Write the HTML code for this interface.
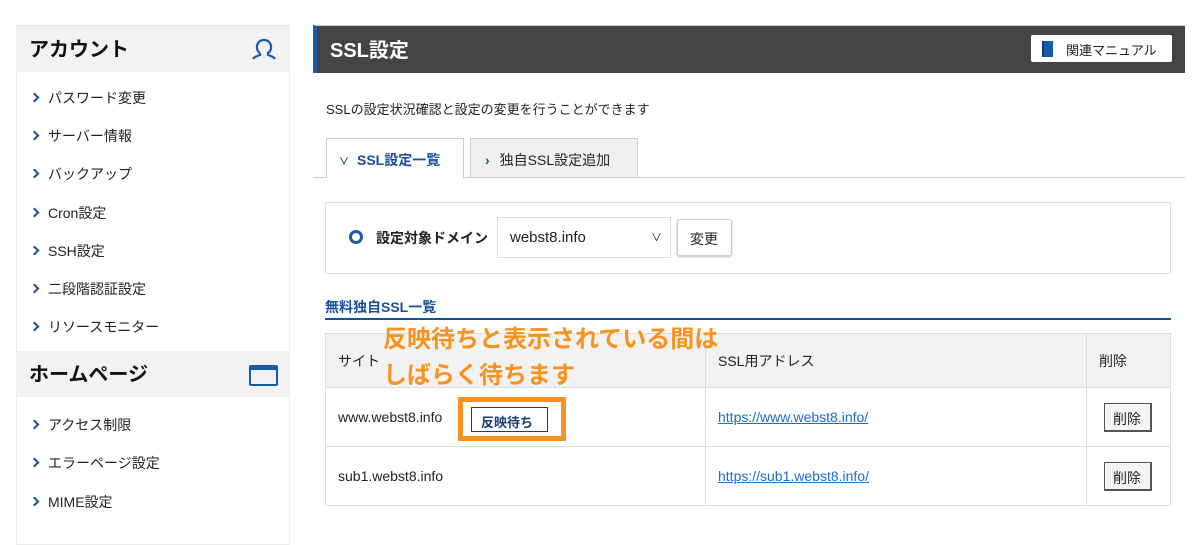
<!DOCTYPE html>
<html><head><meta charset="utf-8"><style>
*{box-sizing:border-box;margin:0;padding:0}
body{width:1200px;height:527px;overflow:hidden;background:#fff;font-family:"Liberation Sans","Noto Sans CJK JP",sans-serif;color:#222;position:relative}
.a{position:absolute}
.side{left:16px;top:25px;width:274px;height:520px;border:1px solid #eee;border-top:1px solid #e6e6e6}
.sh{position:absolute;left:0;width:272px;height:46px;background:#f2f2f2;font-size:20px;font-weight:bold;padding:7px 0 0 12px;color:#111}
.it{position:absolute;left:14px;font-size:14px;color:#222}
.it:before{content:"";display:inline-block;width:5px;height:5px;border-right:2px solid #1a4f9c;border-top:2px solid #1a4f9c;transform:rotate(45deg);margin:0 10px 2px 0}
td,th{border:1px solid #ddd;font-weight:normal;text-align:left;font-size:14px}
a{color:#1a6fc9;text-decoration:underline}
</style></head><body>
<div class="a side">
<div class="sh" style="top:0">アカウント
<svg class="a" style="left:234px;top:11px" width="26" height="24" viewBox="0 0 26 24"><path d="M9 16 C4 13 5 3 13 3 C21 3 22 13 17 16 L17 18 C20 19 23 20 24 22 M9 16 L9 18 C6 19 3 20 2 22" fill="none" stroke="#1a5aa8" stroke-width="2.2"/></svg></div>
<div class="it" style="top:62px">パスワード変更</div>
<div class="it" style="top:100px">サーバー情報</div>
<div class="it" style="top:138px">バックアップ</div>
<div class="it" style="top:177px">Cron設定</div>
<div class="it" style="top:215px">SSH設定</div>
<div class="it" style="top:253px">二段階認証設定</div>
<div class="it" style="top:291px">リソースモニター</div>
<div class="sh" style="top:325px">ホームページ
<div class="a" style="left:232px;top:14px;width:29px;height:21px;border:2px solid #1a5aa8;border-top-width:5px;border-radius:2px"></div></div>
<div class="it" style="top:389px">アクセス制限</div>
<div class="it" style="top:427px">エラーページ設定</div>
<div class="it" style="top:466px">MIME設定</div>
</div>

<div class="a" style="left:313px;top:25px;width:872px;height:48px;background:#444;border-left:4px solid #1a5aa8;border-top:1px solid #ccc"></div>
<div class="a" style="left:330px;top:34px;font-size:20px;font-weight:bold;color:#fff">SSL設定</div>
<div class="a" style="left:1031px;top:35px;width:141px;height:27px;background:#fff;border-radius:2px;font-size:13px;padding:5px 0 0 35px;color:#222">関連マニュアル
<div class="a" style="left:11px;top:6px;width:11px;height:16px;background:#1a5aa8;border-left:2px solid #0d3a75"></div></div>

<div class="a" style="left:326px;top:99px;font-size:13px">SSLの設定状況確認と設定の変更を行うことができます</div>
<div class="a" style="left:313px;top:177px;width:872px;height:1px;background:#ccc"></div>
<div class="a" style="left:326px;top:138px;width:138px;height:40px;background:#fff;border:1px solid #ccc;border-bottom:none;font-size:14px;font-weight:bold;color:#1a4f9c;padding:11px 0 0 12px"><span style="font-size:10px;margin-right:8px">&#8744;</span>SSL設定一覧</div>
<div class="a" style="left:470px;top:138px;width:168px;height:39px;background:#f0f0f0;border:1px solid #ccc;border-bottom:none;font-size:14px;padding:11px 0 0 14px"><span style="color:#1a4f9c;font-weight:bold;margin-right:10px">›</span>独自SSL設定追加</div>

<div class="a" style="left:325px;top:202px;width:846px;height:72px;border:1px solid #ddd"></div>
<div class="a" style="left:349px;top:230px;width:14px;height:14px;border:3px solid #1a5aa8;border-radius:50%"></div>
<div class="a" style="left:376px;top:228px;font-size:14px;font-weight:bold">設定対象ドメイン</div>
<div class="a" style="left:497px;top:217px;width:174px;height:41px;border:1px solid #ddd;font-size:15px;padding:11px 0 0 12px">webst8.info<span class="a" style="right:8px;top:11px;font-size:11px">&#8744;</span></div>
<div class="a" style="left:677px;top:219px;width:55px;height:37px;border:1px solid #ccc;border-radius:3px;box-shadow:0 1px 2px #bbb;font-size:14px;padding:9px 0 0 12px">変更</div>

<div class="a" style="left:325px;top:297px;font-size:14px;font-weight:bold;color:#1a4f9c">無料独自SSL一覧</div>
<div class="a" style="left:325px;top:318px;width:846px;height:2px;background:#1a4f9c"></div>

<table class="a" style="left:325px;top:333px;width:846px;border-collapse:collapse">
<tr style="height:54px;background:#f2f2f2"><th style="width:380px;padding-left:12px">サイト</th><th style="width:381px;padding-left:12px">SSL用アドレス</th><th style="padding-left:12px">削除</th></tr>
<tr style="height:59px"><td style="padding-left:12px">www.webst8.info</td><td style="padding-left:12px"><a>https://www.webst8.info/</a></td><td></td></tr>
<tr style="height:59px"><td style="padding-left:12px">sub1.webst8.info</td><td style="padding-left:12px"><a>https://sub1.webst8.info/</a></td><td></td></tr>
</table>
<div class="a" style="left:1104px;top:403px;width:48px;height:29px;border:1px solid #555;border-right-width:2px;border-bottom-width:2px;background:#f4f4f4;font-size:14px;padding:5px 0 0 8px">削除</div>
<div class="a" style="left:1104px;top:462px;width:48px;height:29px;border:1px solid #555;border-right-width:2px;border-bottom-width:2px;background:#f4f4f4;font-size:14px;padding:5px 0 0 8px">削除</div>

<div class="a" style="left:458px;top:397px;width:108px;height:44px;border:5px solid #f7931e;background:#fff"></div>
<div class="a" style="left:471px;top:407px;width:77px;height:25px;border:1px solid #1a3f7a;font-size:13px;font-weight:bold;color:#1a3f7a;padding:4px 0 0 9px">反映待ち</div>

<div class="a" style="left:383px;top:322px;font-size:24px;font-weight:bold;color:#f7931e;line-height:36px">反映待ちと表示されている間は<br>しばらく待ちます</div>
</body></html>
